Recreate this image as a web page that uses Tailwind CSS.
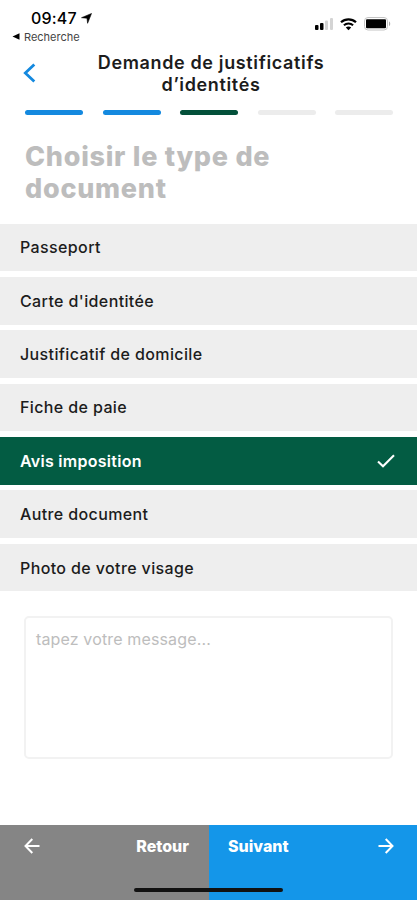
<!DOCTYPE html>
<html lang="fr">
<head>
  <meta charset="UTF-8">
  <meta name="viewport" content="width=device-width, initial-scale=1.0">
  <title>Demande de justificatifs d'identités</title>
  <script src="https://cdn.jsdelivr.net/npm/@tailwindcss/browser@4"></script>
</head>
<body class="bg-white font-['Inter','Liberation_Sans',sans-serif] text-[#1c1c1c]">
  <div class="flex flex-col w-full h-[900px] overflow-hidden">
    <!-- Barre de statut -->
    <div class="h-[51px] flex justify-between">
      <div class="pl-3 pt-2">
        <div class="flex items-center pl-[19px] h-5">
          <span class="text-[16px] font-medium leading-5 tracking-[0.2px] text-black">09:47</span>
          <svg class="w-[11px] h-[11px] ml-[4px]" viewBox="0 0 11 11"><path d="M10.5 0.5L6.6 10.3L6 5.2L0.5 4.7Z" fill="#000" stroke="#000" stroke-width="0.6"/></svg>
        </div>
        <div class="flex items-center h-[17px]">
          <svg class="w-[8px] h-[7px] mr-[4px]" viewBox="0 0 8 7"><path d="M0.5 3.5L7.5 0.3V6.7Z" fill="#000"/></svg>
          <span class="text-[11px] leading-4 tracking-[0px] text-[#444]">Recherche</span>
        </div>
      </div>
      <div class="flex items-center h-[14px] mt-[17px] mr-[26px]">
        <svg class="w-5 h-[14px]" viewBox="0 0 20 14">
          <rect x="1" y="8" width="3.5" height="5" rx="1" fill="#000"/>
          <rect x="6" y="6" width="3.5" height="7" rx="1" fill="#000"/>
          <rect x="11" y="3.5" width="3" height="9.5" rx="1" fill="#d4d4d4"/>
          <rect x="16" y="1" width="3" height="12" rx="1" fill="#d4d4d4"/>
        </svg>
        <svg class="w-[17px] h-[13px] ml-[6px]" viewBox="0 0 17 13" fill="none" stroke="#000">
          <path d="M1 4.3C5.2 0.3 11.8 0.3 16 4.3" stroke-width="2.2"/>
          <path d="M3.9 7.2C6.5 4.8 10.5 4.8 13.1 7.2" stroke-width="2"/>
          <path d="M5.8 9.4C7.3 8.1 9.7 8.1 11.2 9.4L8.5 12.2Z" fill="#000" stroke="none"/>
        </svg>
        <svg class="w-[27px] h-[14px] ml-[7px]" viewBox="0 0 27 14">
          <rect x="0.5" y="0.5" width="23" height="12.5" rx="3.5" fill="#fff" stroke="#c4c4c4"/>
          <rect x="2" y="2.3" width="20" height="9" rx="1" fill="#000"/>
          <path d="M25 4.5C26.6 5 26.6 8.5 25 9Z" fill="#aaa"/>
        </svg>
      </div>
    </div>

    <!-- Titre -->
    <header class="flex h-[59px] pl-[23px]">
      <svg class="w-[13px] h-5 mt-[12px]" viewBox="0 0 13 20" fill="none" stroke="#1489df" stroke-width="2.8"><path d="M11.3 1.5L2.3 10L11.3 18.5"/></svg>
      <h1 class="flex-1 mt-px mr-[31px] text-center text-[18px] leading-[22px] font-semibold tracking-[0.64px]">Demande de justificatifs<br>d’identités</h1>
    </header>

    <!-- Étapes -->
    <div class="flex justify-between pl-[25px] pr-6">
      <div class="w-[58px] h-[5px] rounded-full bg-[#1489df]"></div>
      <div class="w-[58px] h-[5px] rounded-full bg-[#1489df]"></div>
      <div class="w-[58px] h-[5px] rounded-full bg-[#03503a]"></div>
      <div class="w-[58px] h-[5px] rounded-full bg-[#ececec]"></div>
      <div class="w-[58px] h-[5px] rounded-full bg-[#ececec]"></div>
    </div>

    <h2 class="mt-[26px] pl-[25px] h-[82.5px] text-[27px] leading-8 font-extrabold tracking-[0.73px] text-[#bdbdbd]">Choisir le type de<br>document</h2>

    <!-- Liste des documents -->
    <ul class="flex flex-col gap-[5.7px] text-[16px] font-medium tracking-[0.38px]">
      <li class="flex items-center h-[47.7px] pl-5 bg-[#eeeeee]">Passeport</li>
      <li class="flex items-center h-[47.7px] pl-5 bg-[#eeeeee]">Carte d'identitée</li>
      <li class="flex items-center h-[47.7px] pl-5 bg-[#eeeeee]">Justificatif de domicile</li>
      <li class="flex items-center h-[47.7px] pl-5 bg-[#eeeeee]">Fiche de paie</li>
      <li class="flex items-center justify-between h-[47.7px] pl-5 pr-[22px] bg-[#035c43] text-white font-semibold tracking-[0.28px]">
        Avis imposition
        <svg class="w-[18px] h-[14px]" viewBox="0 0 18 14" fill="none" stroke="#fff" stroke-width="2.1"><path d="M1 7.5L6 12.2L17 1.2"/></svg>
      </li>
      <li class="flex items-center h-[47.7px] pl-5 bg-[#eeeeee]">Autre document</li>
      <li class="flex items-center h-[47.7px] pl-5 bg-[#eeeeee]">Photo de votre visage</li>
    </ul>

    <textarea class="block mx-6 mt-[25px] h-[143px] px-[10px] py-[9px] border-2 border-[#f2f2f2] rounded-[5px] resize-none text-[16px] leading-6 tracking-[0.14px] placeholder:text-[#bdbdbd]" placeholder="tapez votre message..."></textarea>

    <!-- Navigation du bas -->
    <footer class="relative mt-auto flex h-[75px] text-white text-[16px] leading-6 font-extrabold">
      <button class="flex items-start justify-between w-[209px] pl-6 pr-5 pt-[9px] bg-[#858585]">
        <svg class="w-4 h-4 mt-1" viewBox="0 0 16 16" fill="none" stroke="#fff" stroke-width="2"><path d="M15.5 8H1.5M8.3 1L1.5 8L8.3 15"/></svg>
        <span>Retour</span>
      </button>
      <button class="flex items-start justify-between flex-1 pl-[19px] pr-[23px] pt-[9px] bg-[#1496e9]">
        <span>Suivant</span>
        <svg class="w-4 h-4 mt-1" viewBox="0 0 16 16" fill="none" stroke="#fff" stroke-width="2"><path d="M0.5 8H14.5M7.7 1L14.5 8L7.7 15"/></svg>
      </button>
      <div class="absolute left-[134px] bottom-[8px] w-[149px] h-[4px] rounded-full bg-[#111]"></div>
    </footer>
  </div>
</body>
</html>
